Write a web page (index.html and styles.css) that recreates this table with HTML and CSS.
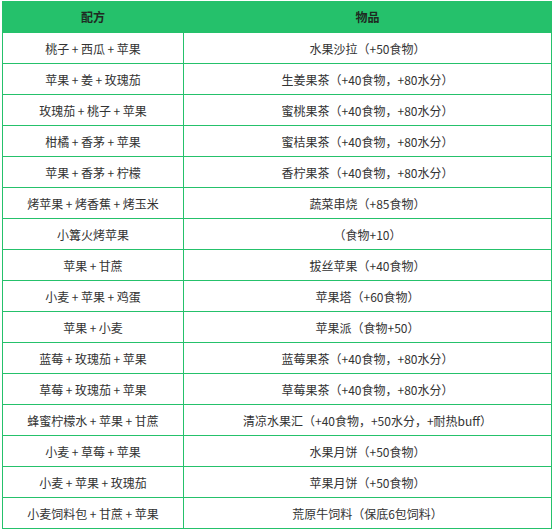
FILE: index.html
```html
<!DOCTYPE html>
<html lang="zh-CN">
<head>
<meta charset="utf-8">
<link rel="stylesheet" href="styles.css">
</head>
<body>
<div class="table">
  <div class="cell head">配方</div><div class="cell head">物品</div>
  <div class="cell">桃子<i>+</i>西瓜<i>+</i>苹果</div><div class="cell">水果沙拉（+50食物）</div>
  <div class="cell">苹果<i>+</i>姜<i>+</i>玫瑰茄</div><div class="cell">生姜果茶（+40食物，+80水分）</div>
  <div class="cell">玫瑰茄<i>+</i>桃子<i>+</i>苹果</div><div class="cell">蜜桃果茶（+40食物，+80水分）</div>
  <div class="cell">柑橘<i>+</i>香茅<i>+</i>苹果</div><div class="cell">蜜桔果茶（+40食物，+80水分）</div>
  <div class="cell">苹果<i>+</i>香茅<i>+</i>柠檬</div><div class="cell">香柠果茶（+40食物，+80水分）</div>
  <div class="cell">烤苹果<i>+</i>烤香蕉<i>+</i>烤玉米</div><div class="cell">蔬菜串烧（+85食物）</div>
  <div class="cell">小篝火烤苹果</div><div class="cell">（食物+10）</div>
  <div class="cell">苹果<i>+</i>甘蔗</div><div class="cell">拔丝苹果（+40食物）</div>
  <div class="cell">小麦<i>+</i>苹果<i>+</i>鸡蛋</div><div class="cell">苹果塔（+60食物）</div>
  <div class="cell">苹果<i>+</i>小麦</div><div class="cell">苹果派（食物+50）</div>
  <div class="cell">蓝莓<i>+</i>玫瑰茄<i>+</i>苹果</div><div class="cell">蓝莓果茶（+40食物，+80水分）</div>
  <div class="cell">草莓<i>+</i>玫瑰茄<i>+</i>苹果</div><div class="cell">草莓果茶（+40食物，+80水分）</div>
  <div class="cell">蜂蜜柠檬水<i>+</i>苹果<i>+</i>甘蔗</div><div class="cell">清凉水果汇（+40食物，+50水分，+耐热buff）</div>
  <div class="cell">小麦<i>+</i>草莓<i>+</i>苹果</div><div class="cell">水果月饼（+50食物）</div>
  <div class="cell">小麦<i>+</i>苹果<i>+</i>玫瑰茄</div><div class="cell">苹果月饼（+50食物）</div>
  <div class="cell">小麦饲料包<i>+</i>甘蔗<i>+</i>苹果</div><div class="cell">荒原牛饲料（保底6包饲料）</div>
</div>
</body>
</html>
```
FILE: styles.css
```css
html, body {
  margin: 0;
  padding: 0;
  background: #ffffff;
}
body {
  padding: 1px 0 0 2px;
  font-family: "Noto Sans CJK SC", "Noto Sans", sans-serif;
  font-size: 12px;
  color: #333333;
}
.table {
  width: 550px;
  box-sizing: border-box;
  display: grid;
  grid-template-columns: 181px 1fr;
  grid-template-rows: 32px;
  grid-auto-rows: 31px;
  border-left: 1px solid #25c16b;
}
.cell {
  box-sizing: border-box;
  border-right: 1px solid #25c16b;
  border-bottom: 1px solid #25c16b;
  display: flex;
  align-items: center;
  justify-content: center;
  white-space: nowrap;
}
.cell i {
  font-style: normal;
  padding: 0 2.5px;
}
.head {
  background: #25c16b;
  font-weight: bold;
  color: #1f2a22;
}
```
